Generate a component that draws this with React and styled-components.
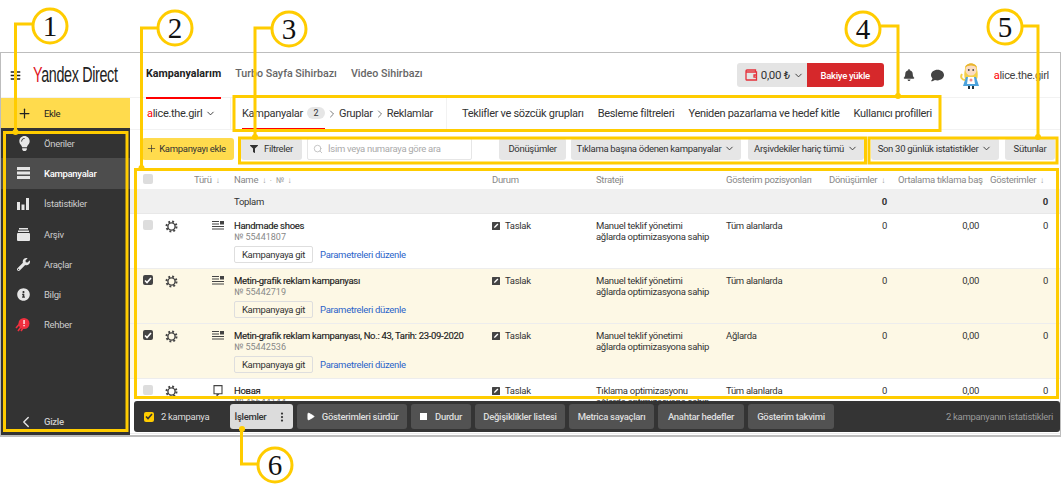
import React from "react";
import styled, { createGlobalStyle } from "styled-components";
import {
  FaBars,
  FaLightbulb,
  FaWrench,
  FaInfoCircle,
  FaBell,
  FaComment,
  FaFilter,
} from "react-icons/fa";
import { Plus, Search, ChevronDown, ChevronRight, ChevronLeft, Play, EllipsisVertical } from "lucide-react";

const GlobalStyle = createGlobalStyle`
  html, body {
    margin: 0;
    padding: 0;
    background: #fff;
    font-family: Roboto, "Liberation Sans", sans-serif;
    font-size: 9.5px;
    letter-spacing: -0.3px;
    color: #333;
  }
  * { box-sizing: border-box; }
  button { letter-spacing: inherit; }
`;

const COLUMNS = "22px 29px 40px 258px 104px 130px 103px 69px 92px 58px";

const Page = styled.div`
  position: relative;
  width: 1061px;
  height: 489px;
  padding-top: 52px;
  overflow: hidden;
`;

const Frame = styled.div`
  width: 1061px;
  height: 385px;
  border: 1px solid #bdbdbd;
  border-width: 1px 1px 2px 1px;
  display: flex;
  flex-direction: column;
  overflow: hidden;
`;

const Header = styled.header`
  height: 45px;
  flex: none;
  display: flex;
  align-items: center;
  border-bottom: 1px solid #f2f2f2;
`;

const Brand = styled.div`
  width: 145px;
  flex: none;
  display: flex;
  align-items: center;
  gap: 12px;
  padding-left: 9px;
  color: #222;
`;

const Logo = styled.span`
  font-family: "Liberation Sans", sans-serif;
  font-size: 22px;
  line-height: 1;
  white-space: nowrap;
  display: inline-block;
  width: 85px;
  letter-spacing: -0.5px;
  transform: scaleX(0.65);
  transform-origin: left center;
  b { color: #e0141c; font-weight: 400; }
`;

const TopNav = styled.nav`
  display: flex;
  gap: 14px;
  align-self: stretch;
`;

const TopLink = styled.a`
  height: 46px;
  display: flex;
  align-items: center;
  padding-bottom: 3px;
  font-size: 10.7px;
  letter-spacing: 0;
  font-weight: ${(p) => (p.$active ? 700 : 500)};
  color: ${(p) => (p.$active ? "#222" : "#666")};
  border-bottom: ${(p) => (p.$active ? "2px solid #f00" : "2px solid transparent")};
`;

const HeaderRight = styled.div`
  margin-left: auto;
  display: flex;
  align-items: center;
  padding-right: 11px;
  color: #444;
`;

const Balance = styled.div`
  width: 70px;
  height: 24px;
  background: #e4e4e4;
  border-radius: 3px 0 0 3px;
  display: flex;
  align-items: center;
  gap: 3px;
  padding-left: 8px;
  font-size: 11.5px;
  color: #333;
`;

const TopUp = styled.button`
  width: 77px;
  height: 24px;
  border: 0;
  border-radius: 0 3px 3px 0;
  background: #d6282b;
  color: #fff;
  font: 500 9.5px Roboto, sans-serif;
  margin-right: 19px;
`;

const IconSlot = styled.span`
  display: flex;
  margin-right: ${(p) => p.$mr}px;
`;

const UserName = styled.span`
  font-size: 11px;
  color: #444;
  margin-left: 12px;
  b { color: #f00; font-weight: 400; }
`;

const Body = styled.div`
  flex: 1;
  display: flex;
  min-height: 0;
`;

const Sidebar = styled.aside`
  width: 129px;
  flex: none;
  background: #333;
  display: flex;
  flex-direction: column;
  color: #ccc;
`;

const AddItem = styled.div`
  height: 30px;
  background: #ffdb4d;
  display: flex;
  align-items: center;
  color: #222;
`;

const NavItem = styled.div`
  height: 30.3px;
  flex: none;
  display: flex;
  align-items: center;
  background: ${(p) => (p.$active ? "#4d4d4d" : "transparent")};
  color: ${(p) => (p.$active ? "#fff" : "#ccc")};
  font-weight: ${(p) => (p.$active ? 500 : 400)};
`;

const NavIcon = styled.span`
  width: 43px;
  flex: none;
  padding-left: 16px;
  display: flex;
  align-items: center;
  color: #e6e6e6;
`;

const SideSpacer = styled.div`
  flex: 1;
`;

const HideItem = styled(NavItem)`
  height: 27px;
  font-weight: 500;
`;

const Main = styled.main`
  position: relative;
  flex: 1;
  min-width: 0;
  overflow: hidden;
  display: flex;
  flex-direction: column;
`;

const SubNav = styled.div`
  height: 32px;
  flex: none;
  display: flex;
  align-items: stretch;
  font-size: 11px;
  color: #333;
  border-bottom: 1px solid #f2f2f2;
  white-space: nowrap;
`;

const Client = styled.div`
  width: 101px;
  flex: none;
  padding-left: 17px;
  display: flex;
  align-items: center;
  gap: 3px;
  border-right: 1px solid #f2f2f2;
  b { color: #f00; font-weight: 400; }
`;

const Crumbs = styled.div`
  width: 216px;
  flex: none;
  padding-left: 11px;
  display: flex;
  align-items: center;
  border-right: 1px solid #f2f2f2;
`;

const CrumbActive = styled.div`
  align-self: stretch;
  display: flex;
  align-items: center;
  gap: 4px;
  border-bottom: 1px solid #f00;
`;

const Badge = styled.span`
  width: 18px;
  height: 12px;
  border-radius: 6px;
  background: #e6e6e6;
  font-size: 9px;
  display: flex;
  align-items: center;
  justify-content: center;
`;

const CrumbArrow = styled(ChevronRight)`
  margin: 0 1px;
`;

const SubLinks = styled.div`
  display: flex;
  align-items: center;
  gap: 14px;
  padding-left: 15px;
`;

const Toolbar = styled.div`
  height: 39px;
  flex: none;
  display: flex;
  align-items: center;
  padding: 0 0 2px 12px;
`;

const ToolButton = styled.button`
  width: ${(p) => p.$w}px;
  height: 22px;
  flex: none;
  border: 0;
  border-radius: 3px;
  margin-right: ${(p) => p.$mr || 0}px;
  background: ${(p) => (p.$primary ? "#ffdb4d" : "#e6e6e6")};
  color: #333;
  font: 400 9.5px Roboto, sans-serif;
  display: flex;
  align-items: center;
  justify-content: center;
  gap: ${(p) => (p.$primary ? 2 : 3)}px;
  padding: 0 ${(p) => (p.$primary ? 4 : 0)}px 0 0;
  white-space: nowrap;
`;

const SearchBox = styled.div`
  width: 165px;
  height: 22px;
  flex: none;
  margin-right: 27px;
  border: 1px solid #e6e6e6;
  border-radius: 2px;
  display: flex;
  align-items: center;
  gap: 5px;
  padding-left: 5px;
  color: #aaa;
  white-space: nowrap;
`;

const TableGrid = styled.div`
  flex: 1;
  min-height: 0;
  overflow: hidden;
`;

const HeadRow = styled.div`
  height: 21px;
  display: grid;
  grid-template-columns: ${COLUMNS};
  align-items: center;
  padding-left: 13px;
  color: #888;
  border-bottom: 1px solid #f0f0f0;
  white-space: nowrap;
`;

const HeadCell = styled.div`
  overflow: hidden;
  max-width: ${(p) => (p.$clip ? "85px" : "none")};
`;

const Arrow = styled.span`
  font-size: 8px;
  margin-left: 4px;
  color: #999;
`;

const TotalRow = styled.div`
  height: 24px;
  display: grid;
  grid-template-columns: ${COLUMNS};
  align-items: center;
  padding-left: 13px;
  background: #f0f0f0;
  border-bottom: 1px solid #e8e8e8;
  color: #333;
`;

const CellName = styled.div`
  grid-column: 4 / 8;
`;

const NumCell = styled.div`
  text-align: right;
  padding-right: ${(p) => p.$pr || 0}px;
  font-weight: ${(p) => (p.$bold ? 700 : 400)};
`;

const Row = styled.div`
  height: 55px;
  display: grid;
  grid-template-columns: ${COLUMNS};
  align-items: start;
  padding: 6px 0 0 13px;
  background: ${(p) => (p.$selected ? "#fdf8e5" : "#fff")};
  border-bottom: 1px solid #ededed;
  line-height: 11px;
  color: #333;
`;

const Check = styled.span`
  width: 10px;
  height: 10px;
  border-radius: 2px;
  background: ${(p) => (p.$on ? (p.$yellow ? "#ffcc00" : "#444") : "#ddd")};
  display: flex;
  align-items: center;
  justify-content: center;
`;

const CampaignTitle = styled.div`
  color: #222;
  white-space: nowrap;
  -webkit-text-stroke: 0.15px #222;
`;

const CampaignId = styled.div`
  margin-top: 1px;
  font-size: 9px;
  letter-spacing: 0;
  color: #888;
`;

const CampaignActions = styled.div`
  margin-top: 3px;
  display: flex;
  align-items: center;
  gap: 7px;
`;

const GoButton = styled.button`
  width: 79px;
  height: 17px;
  border: 1px solid #dedede;
  border-radius: 2px;
  background: ${(p) => (p.$selected ? "#fdf8e5" : "#fff")};
  color: #333;
  font: 400 9.5px Roboto, sans-serif;
  padding: 0;
`;

const EditLink = styled.a`
  color: #2b63c9;
  white-space: nowrap;
`;

const Status = styled.div`
  display: flex;
  align-items: center;
  gap: 5px;
`;

const Strategy = styled.div`
  white-space: pre-line;
`;

const ActionBar = styled.div`
  position: absolute;
  left: 4px;
  right: 0;
  bottom: 3px;
  height: 31px;
  border-radius: 3px;
  background: rgba(48, 48, 48, 0.98);
  display: flex;
  align-items: center;
  color: #ddd;
  padding-left: 10px;
`;

const SelectedCount = styled.div`
  width: 86px;
  flex: none;
  display: flex;
  align-items: center;
  gap: 7px;
`;

const BarButton = styled.button`
  width: ${(p) => p.$w}px;
  height: 25px;
  flex: none;
  margin-right: 4px;
  border: 0;
  border-radius: 3px;
  background: ${(p) => (p.$light ? "#dcdcdc" : "#525252")};
  color: ${(p) => (p.$light ? "#333" : "#ddd")};
  font: 500 9.5px Roboto, sans-serif;
  display: flex;
  align-items: center;
  justify-content: center;
  gap: ${(p) => p.$gap || 0}px;
  padding: 0;
  white-space: nowrap;
`;

const BarStats = styled.div`
  margin-left: auto;
  padding-right: 7px;
  color: #999;
  white-space: nowrap;
`;

const Overlay = styled.svg`
  position: absolute;
  inset: 0;
  pointer-events: none;
  text {
    font-family: "Liberation Serif", serif;
    font-size: 29px;
    letter-spacing: 0;
    fill: #111;
    text-anchor: middle;
  }
  rect, polyline, circle.ring {
    fill: none;
    stroke: #ffcc00;
    stroke-width: 3;
  }
  circle.ring { fill: #fff; }
  circle.dot { fill: #ffcc00; }
`;

const NAV_ITEMS = [
  { label: "Öneriler", icon: <FaLightbulb size={15} /> },
  { label: "Kampanyalar", icon: <StackIcon />, active: true },
  { label: "İstatistikler", icon: <BarsIcon /> },
  { label: "Arşiv", icon: <ArchiveIcon /> },
  { label: "Araçlar", icon: <FaWrench size={13} /> },
  { label: "Bilgi", icon: <FaInfoCircle size={13} /> },
  { label: "Rehber", icon: <RocketIcon /> },
];

const MANUAL = "Manuel teklif yönetimi\nağlarda optimizasyona sahip";

const CAMPAIGNS = [
  { title: "Handmade shoes", id: "55441807", strategy: MANUAL, place: "Tüm alanlarda", icon: "text" },
  { title: "Metin-grafik reklam kampanyası", id: "55442719", strategy: MANUAL, place: "Tüm alanlarda", icon: "text", selected: true },
  { title: "Metin-grafik reklam kampanyası, No.: 43, Tarih: 23-09-2020", id: "55442536", strategy: MANUAL, place: "Ağlarda", icon: "text", selected: true },
  { title: "Новая", id: "45644144", strategy: "Tıklama optimizasyonu\nağlarda optimizasyona sahip", place: "Tüm alanlarda", icon: "mobile" },
];

const RECTS = [
  [4.5, 132.5, 122.5, 298],
  [135.5, 169.5, 922, 228],
  [239.5, 138, 626, 25],
  [234, 96.5, 706, 34],
  [869, 138, 188, 25],
];

const CALLOUTS = [
  { n: 1, cx: 50, cy: 26, line: "33,24 15.5,24 15.5,132", dot: [15.5, 132] },
  { n: 2, cx: 175, cy: 28, line: "157,28 141.5,28 141.5,168", dot: [141.5, 168] },
  { n: 3, cx: 289, cy: 29, line: "271,28 255,28 255,137", dot: [255, 137] },
  { n: 4, cx: 863, cy: 29, line: "881,26 898,26 898,96", dot: [898, 96] },
  { n: 5, cx: 1005, cy: 27, line: "1023,26 1038,26 1038,137", dot: [1038, 137] },
  { n: 6, cx: 275, cy: 465, line: "257,464 241.5,464 241.5,429", dot: [242, 429] },
];

function StackIcon() {
  return (
    <svg width="13" height="12" viewBox="0 0 13 12" fill="currentColor">
      <rect y="0" width="13" height="3" />
      <rect y="4.5" width="13" height="3" />
      <rect y="9" width="13" height="3" />
    </svg>
  );
}

function BarsIcon() {
  return (
    <svg width="12" height="12" viewBox="0 0 12 12" fill="currentColor">
      <rect x="0" y="4" width="3" height="8" />
      <rect x="4.5" y="6.5" width="3" height="5.5" />
      <rect x="9" y="0" width="3" height="12" />
    </svg>
  );
}

function ArchiveIcon() {
  return (
    <svg width="13" height="13" viewBox="0 0 13 13" fill="currentColor">
      <rect x="2" y="0" width="9" height="1.5" />
      <rect x="1" y="2.5" width="11" height="1.5" />
      <rect x="0" y="5" width="13" height="8" rx="1" />
    </svg>
  );
}

function RocketIcon() {
  return (
    <svg width="15" height="14" viewBox="0 0 15 14" style={{ marginLeft: -2 }}>
      <circle cx="9" cy="5.5" r="5.5" fill="#f0303f" />
      <path d="M4.5 6L1 10M6 9l-3 4M8 10l-2 3" stroke="#f0303f" strokeWidth="1.6" fill="none" />
      <rect x="8.4" y="2" width="1.3" height="4" fill="#fff" />
      <rect x="8.4" y="7" width="1.3" height="1.3" fill="#fff" />
    </svg>
  );
}

function WalletIcon() {
  return (
    <svg width="13" height="12" viewBox="0 0 13 12" fill="none" stroke="#e5303a" strokeWidth="1.3">
      <path d="M1 3h10.5v8H1.6A.8.8 0 0 1 1 10.2V2A1 1 0 0 1 2 1h8.5v2" />
      <path d="M12 6H9v2.2h3" />
    </svg>
  );
}

function GearIcon() {
  return (
    <svg width="13" height="13" viewBox="0 0 13 13" fill="none" stroke="#444">
      <circle cx="6.5" cy="6.5" r="3.6" strokeWidth="1.4" />
      <circle cx="6.5" cy="6.5" r="5" strokeWidth="2" strokeDasharray="1.9 2.03" />
    </svg>
  );
}

function TextAdIcon() {
  return (
    <svg width="12" height="9" viewBox="0 0 12 9" fill="#444" style={{ marginLeft: 18, marginTop: 1 }}>
      <rect y="0" width="7" height="1" />
      <rect y="2.5" width="7" height="1" />
      <rect x="8" y="0" width="4" height="3.5" />
      <rect y="5" width="12" height="1" />
      <rect y="7.5" width="12" height="1" />
    </svg>
  );
}

function MobileAdIcon() {
  return (
    <svg width="10" height="11" viewBox="0 0 10 11" fill="none" stroke="#444" strokeWidth="1.1" style={{ marginLeft: 19 }}>
      <path d="M1 .6h8v8.2H1zM4 8.8v1.8l2-1.8" />
    </svg>
  );
}

function DraftIcon() {
  return (
    <svg width="8" height="8" viewBox="0 0 8 8">
      <rect width="8" height="8" rx="0.5" fill="#444" />
      <path d="M2 6l.4-1.5L5.4 1.5l1 1-3 3z" fill="#fff" />
    </svg>
  );
}

function Tick({ color }) {
  return (
    <svg width="8" height="7" viewBox="0 0 8 7" fill="none" stroke={color} strokeWidth="1.6">
      <path d="M1 3.5l2 2 4-4.5" />
    </svg>
  );
}

function Avatar() {
  return (
    <svg width="22" height="30" viewBox="0 0 22 30" style={{ display: "block" }}>
      <path d="M5 9C4 2 18 2 17 9c1 4 1 8 0 10l-12 0C4 16 4 13 5 9z" fill="#f3cf4a" />
      <ellipse cx="11" cy="10" rx="5.5" ry="5.5" fill="#fbdcc3" />
      <path d="M5 7c3-5 9-5 12 0-4-2-8-2-12 0z" fill="#e9b52f" />
      <circle cx="8.8" cy="10" r="0.9" fill="#444" />
      <circle cx="13.2" cy="10" r="0.9" fill="#444" />
      <path d="M6 17h10l3 9H3z" fill="#4da3dc" />
      <path d="M8 17h6l1 7H7z" fill="#fff" />
      <circle cx="11" cy="20" r="1.5" fill="#ef8a8a" />
      <path d="M8 26h2v3H8zM12 26h2v3h-2z" fill="#23343f" />
      <path d="M2 14c-2 3 0 6 3 6" stroke="#f3cf4a" strokeWidth="2" fill="none" />
    </svg>
  );
}

function SortArrow() {
  return <Arrow>↓</Arrow>;
}

function CampaignRow({ campaign }) {
  const { title, id, strategy, place, icon, selected } = campaign;
  return (
    <Row $selected={selected}>
      <Check $on={selected}>{selected && <Tick color="#fff" />}</Check>
      <GearIcon />
      {icon === "text" ? <TextAdIcon /> : <MobileAdIcon />}
      <div>
        <CampaignTitle>{title}</CampaignTitle>
        <CampaignId>№ {id}</CampaignId>
        <CampaignActions>
          <GoButton $selected={selected}>Kampanyaya git</GoButton>
          <EditLink>Parametreleri düzenle</EditLink>
        </CampaignActions>
      </div>
      <Status>
        <DraftIcon />
        Taslak
      </Status>
      <Strategy>{strategy}</Strategy>
      <div>{place}</div>
      <NumCell $pr={11}>0</NumCell>
      <NumCell $pr={11}>0,00</NumCell>
      <NumCell>0</NumCell>
    </Row>
  );
}

export default function App() {
  return (
    <Page>
      <GlobalStyle />
      <Frame>
        <Header>
          <Brand>
            <FaBars size={11} />
            <Logo>
              <b>Y</b>andex Direct
            </Logo>
          </Brand>
          <TopNav>
            <TopLink $active>Kampanyalarım</TopLink>
            <TopLink>Turbo Sayfa Sihirbazı</TopLink>
            <TopLink>Video Sihirbazı</TopLink>
          </TopNav>
          <HeaderRight>
            <Balance>
              <WalletIcon />
              0,00 ₺
              <ChevronDown size={11} />
            </Balance>
            <TopUp>Bakiye yükle</TopUp>
            <IconSlot $mr={16}>
              <FaBell size={12} />
            </IconSlot>
            <IconSlot $mr={16}>
              <FaComment size={13} />
            </IconSlot>
            <Avatar />
            <UserName>
              <b>a</b>lice.the.girl
            </UserName>
          </HeaderRight>
        </Header>
        <Body>
          <Sidebar>
            <AddItem>
              <NavIcon>
                <Plus size={15} strokeWidth={2} color="#222" />
              </NavIcon>
              Ekle
            </AddItem>
            {NAV_ITEMS.map((item) => (
              <NavItem key={item.label} $active={item.active}>
                <NavIcon>{item.icon}</NavIcon>
                {item.label}
              </NavItem>
            ))}
            <SideSpacer />
            <HideItem>
              <NavIcon>
                <ChevronLeft size={18} strokeWidth={1.8} />
              </NavIcon>
              Gizle
            </HideItem>
          </Sidebar>
          <Main>
            <SubNav>
              <Client>
                <span>
                  <b>a</b>lice.the.girl
                </span>
                <ChevronDown size={11} />
              </Client>
              <Crumbs>
                <CrumbActive>
                  Kampanyalar
                  <Badge>2</Badge>
                </CrumbActive>
                <CrumbArrow size={12} strokeWidth={1.3} />
                Gruplar
                <CrumbArrow size={12} strokeWidth={1.3} />
                Reklamlar
              </Crumbs>
              <SubLinks>
                <span>Teklifler ve sözcük grupları</span>
                <span>Besleme filtreleri</span>
                <span>Yeniden pazarlama ve hedef kitle</span>
                <span>Kullanıcı profilleri</span>
              </SubLinks>
            </SubNav>
            <Toolbar>
              <ToolButton $primary $w={92} $mr={7}>
                <Plus size={11} strokeWidth={1.5} />
                Kampanyayı ekle
              </ToolButton>
              <ToolButton $w={61} $mr={5}>
                <FaFilter size={8} style={{ marginRight: 3 }} />
                Filtreler
              </ToolButton>
              <SearchBox>
                <Search size={10} color="#bbb" />
                İsim veya numaraya göre ara
              </SearchBox>
              <ToolButton $w={67} $mr={5}>
                Dönüşümler
              </ToolButton>
              <ToolButton $w={170} $mr={7}>
                Tıklama başına ödenen kampanyalar
                <ChevronDown size={11} />
              </ToolButton>
              <ToolButton $w={116} $mr={7}>
                Arşivdekiler hariç tümü
                <ChevronDown size={11} />
              </ToolButton>
              <ToolButton $w={128} $mr={6}>
                Son 30 günlük istatistikler
                <ChevronDown size={11} />
              </ToolButton>
              <ToolButton $w={50}>Sütunlar</ToolButton>
            </Toolbar>
            <TableGrid>
              <HeadRow>
                <Check />
                <span />
                <HeadCell>
                  Türü
                  <SortArrow />
                </HeadCell>
                <HeadCell>
                  Name
                  <SortArrow />
                  <Arrow>·</Arrow>
                  <Arrow>№</Arrow>
                  <SortArrow />
                </HeadCell>
                <HeadCell>Durum</HeadCell>
                <HeadCell>Strateji</HeadCell>
                <HeadCell>Gösterim pozisyonları</HeadCell>
                <HeadCell>
                  Dönüşümler
                  <SortArrow />
                </HeadCell>
                <HeadCell $clip>Ortalama tıklama başına</HeadCell>
                <HeadCell>
                  Gösterimler
                  <SortArrow />
                </HeadCell>
              </HeadRow>
              <TotalRow>
                <CellName>Toplam</CellName>
                <NumCell $bold $pr={11}>
                  0
                </NumCell>
                <span />
                <NumCell $bold>0</NumCell>
              </TotalRow>
              {CAMPAIGNS.map((campaign) => (
                <CampaignRow key={campaign.id} campaign={campaign} />
              ))}
            </TableGrid>
            <ActionBar>
              <SelectedCount>
                <Check $on $yellow>
                  <Tick color="#333" />
                </Check>
                2 kampanya
              </SelectedCount>
              <BarButton $light $w={63} $gap={10}>
                İşlemler
                <EllipsisVertical size={12} strokeWidth={2.5} />
              </BarButton>
              <BarButton $w={110} $gap={7}>
                <Play size={9} fill="#fff" color="#fff" />
                Gösterimleri sürdür
              </BarButton>
              <BarButton $w={60} $gap={8}>
                <svg width="7" height="7">
                  <rect width="7" height="7" fill="#fff" />
                </svg>
                Durdur
              </BarButton>
              <BarButton $w={90}>Değişiklikler listesi</BarButton>
              <BarButton $w={85}>Metrica sayaçları</BarButton>
              <BarButton $w={86}>Anahtar hedefler</BarButton>
              <BarButton $w={86}>Gösterim takvimi</BarButton>
              <BarStats>2 kampanyanın istatistikleri</BarStats>
            </ActionBar>
          </Main>
        </Body>
      </Frame>
      <Overlay width="1061" height="489" viewBox="0 0 1061 489">
        {RECTS.map(([x, y, w, h]) => (
          <rect key={x} x={x} y={y} width={w} height={h} />
        ))}
        {CALLOUTS.map(({ n, cx, cy, line, dot }) => (
          <g key={n}>
            <polyline points={line} />
            <circle className="dot" cx={dot[0]} cy={dot[1]} r="3" />
            <circle className="ring" cx={cx} cy={cy} r="17" />
            <text x={cx} y={cy + 10}>
              {n}
            </text>
          </g>
        ))}
      </Overlay>
    </Page>
  );
}
